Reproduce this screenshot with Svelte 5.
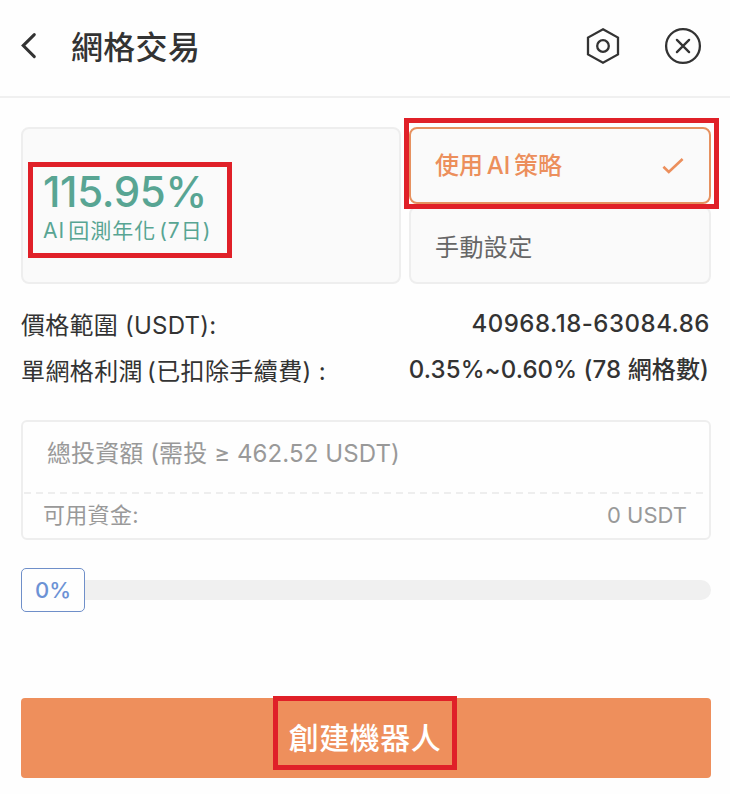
<script lang="ts">
	let strategy: 'ai' | 'manual' = $state('ai');
	let percent = $state(0);
</script>

<div class="screen">
	<header class="header">
		<button class="icon-button" aria-label="返回">
			<svg class="back" width="18" height="28" viewBox="0 0 18 28">
				<path d="M14.3 2.6 3.2 13.6l11.1 11" />
			</svg>
		</button>
		<h1>網格交易</h1>
		<button class="icon-button settings" aria-label="設定">
			<svg width="36" height="38" viewBox="0 0 36 38">
				<path d="M18 2.2 33 10.6v16.8L18 35.8 3 27.4V10.6Z" />
				<circle cx="18" cy="19" r="5.8" />
			</svg>
		</button>
		<button class="icon-button" aria-label="關閉">
			<svg width="38" height="38" viewBox="0 0 38 38">
				<circle cx="19" cy="19" r="16.9" />
				<path d="m12.9 12.9 12.2 12.2M25.1 12.9 12.9 25.1" stroke-linecap="round" />
			</svg>
		</button>
	</header>

	<main>
		<section class="strategy">
			<div class="card result">
				<div class="result-text">
					<strong>115.95%</strong>
					<span>AI<i></i>回測年化<i></i>(7日)</span>
					<div class="highlight"></div>
				</div>
			</div>
			<div class="options">
				<button
					class="card option"
					class:selected={strategy === 'ai'}
					onclick={() => (strategy = 'ai')}
				>
					<span>使用<i></i>AI<i></i>策略</span>
					{#if strategy === 'ai'}
						<svg width="24" height="20" viewBox="0 0 24 20">
							<path d="m2.4 10.8 5.4 5.2L21.6 3" />
						</svg>
					{/if}
					<div class="highlight"></div>
				</button>
				<button
					class="card option"
					class:selected={strategy === 'manual'}
					onclick={() => (strategy = 'manual')}
				>
					<span>手動設定</span>
				</button>
			</div>
		</section>

		<dl class="details">
			<div>
				<dt class="narrow">價格範圍 (USDT):</dt>
				<dd class="range">40968.18-63084.86</dd>
			</div>
			<div>
				<dt>單網格利潤<i></i>(已扣除手續費) :</dt>
				<dd>0.35%~0.60% (78 網格數)</dd>
			</div>
		</dl>

		<section class="amount">
			<div class="placeholder">總投資額 (需投 ≥ 462.52 USDT)</div>
			<div class="divider"></div>
			<div class="available">
				<span class="label">可用資金:</span>
				<span class="balance">0 USDT</span>
			</div>
		</section>

		<div class="slider">
			<div class="thumb">{percent}%</div>
			<div class="track"></div>
		</div>

		<button class="create">
			<span>創建機器人</span>
			<div class="highlight"></div>
		</button>
	</main>
</div>

<style>
	:global(body) {
		background: #fefefe;
	}

	.screen {
		box-sizing: border-box;
		width: 730px;
		height: 794px;
		overflow: hidden;
		color: #333;
		font-family: Inter, 'Noto Sans CJK TC', sans-serif;
		font-size: 24px;
	}

	button {
		margin: 0;
		padding: 0;
		border: 0;
		background: none;
		color: inherit;
		font: inherit;
		text-align: left;
	}

	/* thin gap between latin and CJK runs */
	i {
		display: inline-block;
		width: 4px;
	}

	.header {
		display: flex;
		align-items: center;
		box-sizing: border-box;
		height: 98px;
		padding: 0 28px 4px 20px;
		border-bottom: 2px solid #f0f0f0;
	}

	.header svg {
		display: block;
		fill: none;
		stroke: #333;
		stroke-width: 2.3;
	}

	.header .back {
		stroke-width: 3;
		stroke-linecap: round;
	}

	h1 {
		flex: 1;
		margin: 0 0 0 33px;
		padding-top: 3px;
		font-size: 32px;
		font-weight: 500;
		line-height: 46px;
		letter-spacing: 0.3px;
	}

	.settings {
		margin-right: 43px;
	}

	main {
		padding: 29px 19px 0 21px;
	}

	.card {
		box-sizing: border-box;
		border: 2px solid #eee;
		border-radius: 8px;
		background: #fafafa;
	}

	.strategy {
		display: flex;
		gap: 8px;
		height: 157px;
	}

	.result {
		width: 380px;
		padding: 33px 5px;
	}

	.result-text {
		position: relative;
		box-sizing: border-box;
		width: 204px;
		height: 96px;
		padding: 7px 15px;
		color: #58a593;
	}

	.result-text strong {
		display: block;
		font-size: 42px;
		font-weight: 500;
		line-height: 46px;
		letter-spacing: -0.35px;
	}

	.result-text span {
		display: block;
		font-size: 21px;
		line-height: 31px;
		letter-spacing: 1px;
		white-space: nowrap;
	}

	.result-text i {
		width: 3px;
	}

	.highlight {
		position: absolute;
		z-index: 1;
		inset: 0;
		border: 5px solid #e02028;
		pointer-events: none;
	}

	.options {
		display: flex;
		flex-direction: column;
		gap: 2px;
		width: 302px;
	}

	.option {
		position: relative;
		display: flex;
		align-items: center;
		justify-content: space-between;
		height: 77px;
		padding: 0 24px 2px 24px;
		color: #666;
		letter-spacing: 0.4px;
	}

	.option + .option {
		height: 78px;
		padding-bottom: 0;
	}

	.option.selected {
		border-color: #e6915f;
		padding-bottom: 4px;
		color: #ec8f5c;
		font-weight: 500;
		letter-spacing: 0.1px;
	}

	.option.selected i {
		width: 3.5px;
	}

	.option svg {
		position: relative;
		top: 2px;
		fill: none;
		stroke: #ec8f5c;
		stroke-width: 2.6;
	}

	.option .highlight {
		inset: -11px -10px -7px -7px;
	}

	.details {
		margin: 17px 0 0;
	}

	.details div {
		display: flex;
		justify-content: space-between;
		height: 46px;
		line-height: 46px;
	}

	dt {
		padding-top: 2px;
		letter-spacing: 0.4px;
	}

	.narrow {
		letter-spacing: 0.25px;
	}

	dd {
		margin: 0;
		padding-right: 2px;
		font-weight: 500;
		letter-spacing: 0.1px;
	}

	.range {
		padding-right: 1px;
		letter-spacing: 0.5px;
	}

	.amount {
		box-sizing: border-box;
		height: 120px;
		margin-top: 27px;
		border: 2px solid #eee;
		border-radius: 6px;
		color: #999;
	}

	.placeholder {
		height: 70px;
		padding-left: 24px;
		line-height: 63px;
		letter-spacing: 0.1px;
	}

	.divider {
		height: 2px;
		margin: 0 5px 0 1px;
		background: repeating-linear-gradient(90deg, #eee 0 7px, transparent 7px 12px);
	}

	.available {
		display: flex;
		justify-content: space-between;
		padding: 0 22px 0 20px;
		font-size: 22px;
		line-height: 43px;
	}

	.label {
		letter-spacing: 0.3px;
	}

	.slider {
		display: flex;
		align-items: center;
		height: 44px;
		margin-top: 28px;
	}

	.thumb {
		box-sizing: border-box;
		width: 64px;
		height: 44px;
		border: 1px solid #6f8fc9;
		border-radius: 5px;
		color: #6c92d5;
		font-size: 22px;
		font-weight: 500;
		line-height: 43px;
		text-align: center;
	}

	.track {
		flex: 1;
		height: 20px;
		border-radius: 0 10px 10px 0;
		background: #f0f0f0;
	}

	.create {
		display: flex;
		position: relative;
		align-items: center;
		justify-content: center;
		box-sizing: border-box;
		width: 690px;
		height: 80px;
		margin-top: 86px;
		padding: 0 2px 4px 0;
		border-radius: 4px;
		background: #ee8f5c;
		color: #fff;
		font-size: 30px;
		font-weight: 500;
		letter-spacing: 0.5px;
	}

	.create .highlight {
		inset: -2px 254px 8px 252px;
	}
</style>
